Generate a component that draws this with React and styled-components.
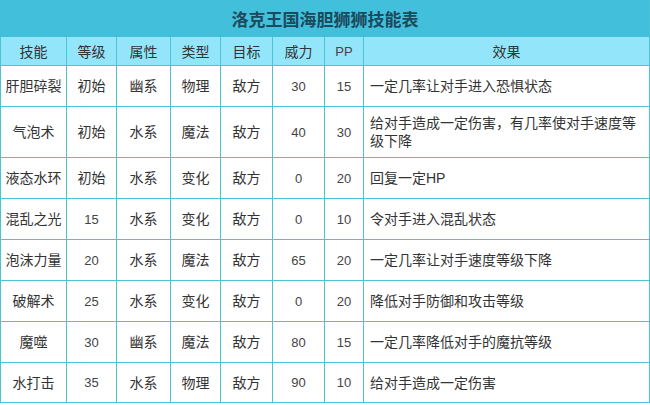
import React from "react";
import styled, { createGlobalStyle } from "styled-components";

const Global = createGlobalStyle`
  html, body { margin: 0; padding: 0; background: #ffffff; }
  body { font-family: "Liberation Sans", "Noto Sans CJK SC", sans-serif; }
`;

const Table = styled.table`
  width: 649px;
  table-layout: fixed;
  border-collapse: collapse;
  font-size: 14px;
  color: #333333;
  font-family: "Liberation Sans", "Noto Sans CJK SC", sans-serif;
`;

const TitleCell = styled.th`
  height: 35px;
  padding: 0;
  background: #41bfdb;
  color: #1b4a5c;
  font-size: 17px;
  font-weight: bold;
  text-align: center;
  border: 1px solid #41bfdb;
  border-right: 1px solid #4cc3d3;
`;

const HeadCell = styled.th`
  height: 28px;
  padding: 0;
  background: #93e6fa;
  font-weight: normal;
  color: #333333;
  text-align: center;
  border: 1px solid #4cc3d3;
  border-top: none;
`;

const Cell = styled.td`
  height: ${(p) => p.$h}px;
  padding: 0 ${(p) => (p.$left ? "6px" : "0")};
  text-align: ${(p) => (p.$left ? "left" : "center")};
  line-height: 18px;
  border: 1px solid #4cc3d3;
  background: #ffffff;
  vertical-align: middle;
`;

const Num = styled.span`
  font-size: 13px;
  font-family: "Liberation Sans", "Noto Sans CJK SC", sans-serif;
  color: #444444;
`;

const widths = [66, 50, 54, 50, 52, 52, 39, 286];
const headers = ["技能", "等级", "属性", "类型", "目标", "威力", "PP", "效果"];

const rows = [
  ["肝胆碎裂", "初始", "幽系", "物理", "敌方", "30", "15", "一定几率让对手进入恐惧状态", 40],
  ["气泡术", "初始", "水系", "魔法", "敌方", "40", "30", "给对手造成一定伤害，有几率使对手速度等级下降", 50],
  ["液态水环", "初始", "水系", "变化", "敌方", "0", "20", "回复一定HP", 40],
  ["混乱之光", "15", "水系", "变化", "敌方", "0", "10", "令对手进入混乱状态", 40],
  ["泡沫力量", "20", "水系", "魔法", "敌方", "65", "20", "一定几率让对手速度等级下降", 40],
  ["破解术", "25", "水系", "变化", "敌方", "0", "20", "降低对手防御和攻击等级", 40],
  ["魔噬", "30", "幽系", "魔法", "敌方", "80", "15", "一定几率降低对手的魔抗等级", 40],
  ["水打击", "35", "水系", "物理", "敌方", "90", "10", "给对手造成一定伤害", 39],
];

const isNum = (v) => /^\d+$/.test(v);

export default function App() {
  return (
    <>
      <Global />
      <Table>
        <colgroup>
          {widths.map((w, i) => (
            <col key={i} style={{ width: w }} />
          ))}
        </colgroup>
        <thead>
          <tr>
            <TitleCell colSpan={8}>洛克王国海胆狮狮技能表</TitleCell>
          </tr>
          <tr>
            {headers.map((h) => (
              <HeadCell key={h}>{h === "PP" ? <Num>{h}</Num> : h}</HeadCell>
            ))}
          </tr>
        </thead>
        <tbody>
          {rows.map((r) => (
            <tr key={r[0]}>
              {r.slice(0, 8).map((v, i) => (
                <Cell key={i} $h={r[8]} $left={i === 7}>
                  {isNum(v) ? <Num>{v}</Num> : v}
                </Cell>
              ))}
            </tr>
          ))}
        </tbody>
      </Table>
    </>
  );
}
